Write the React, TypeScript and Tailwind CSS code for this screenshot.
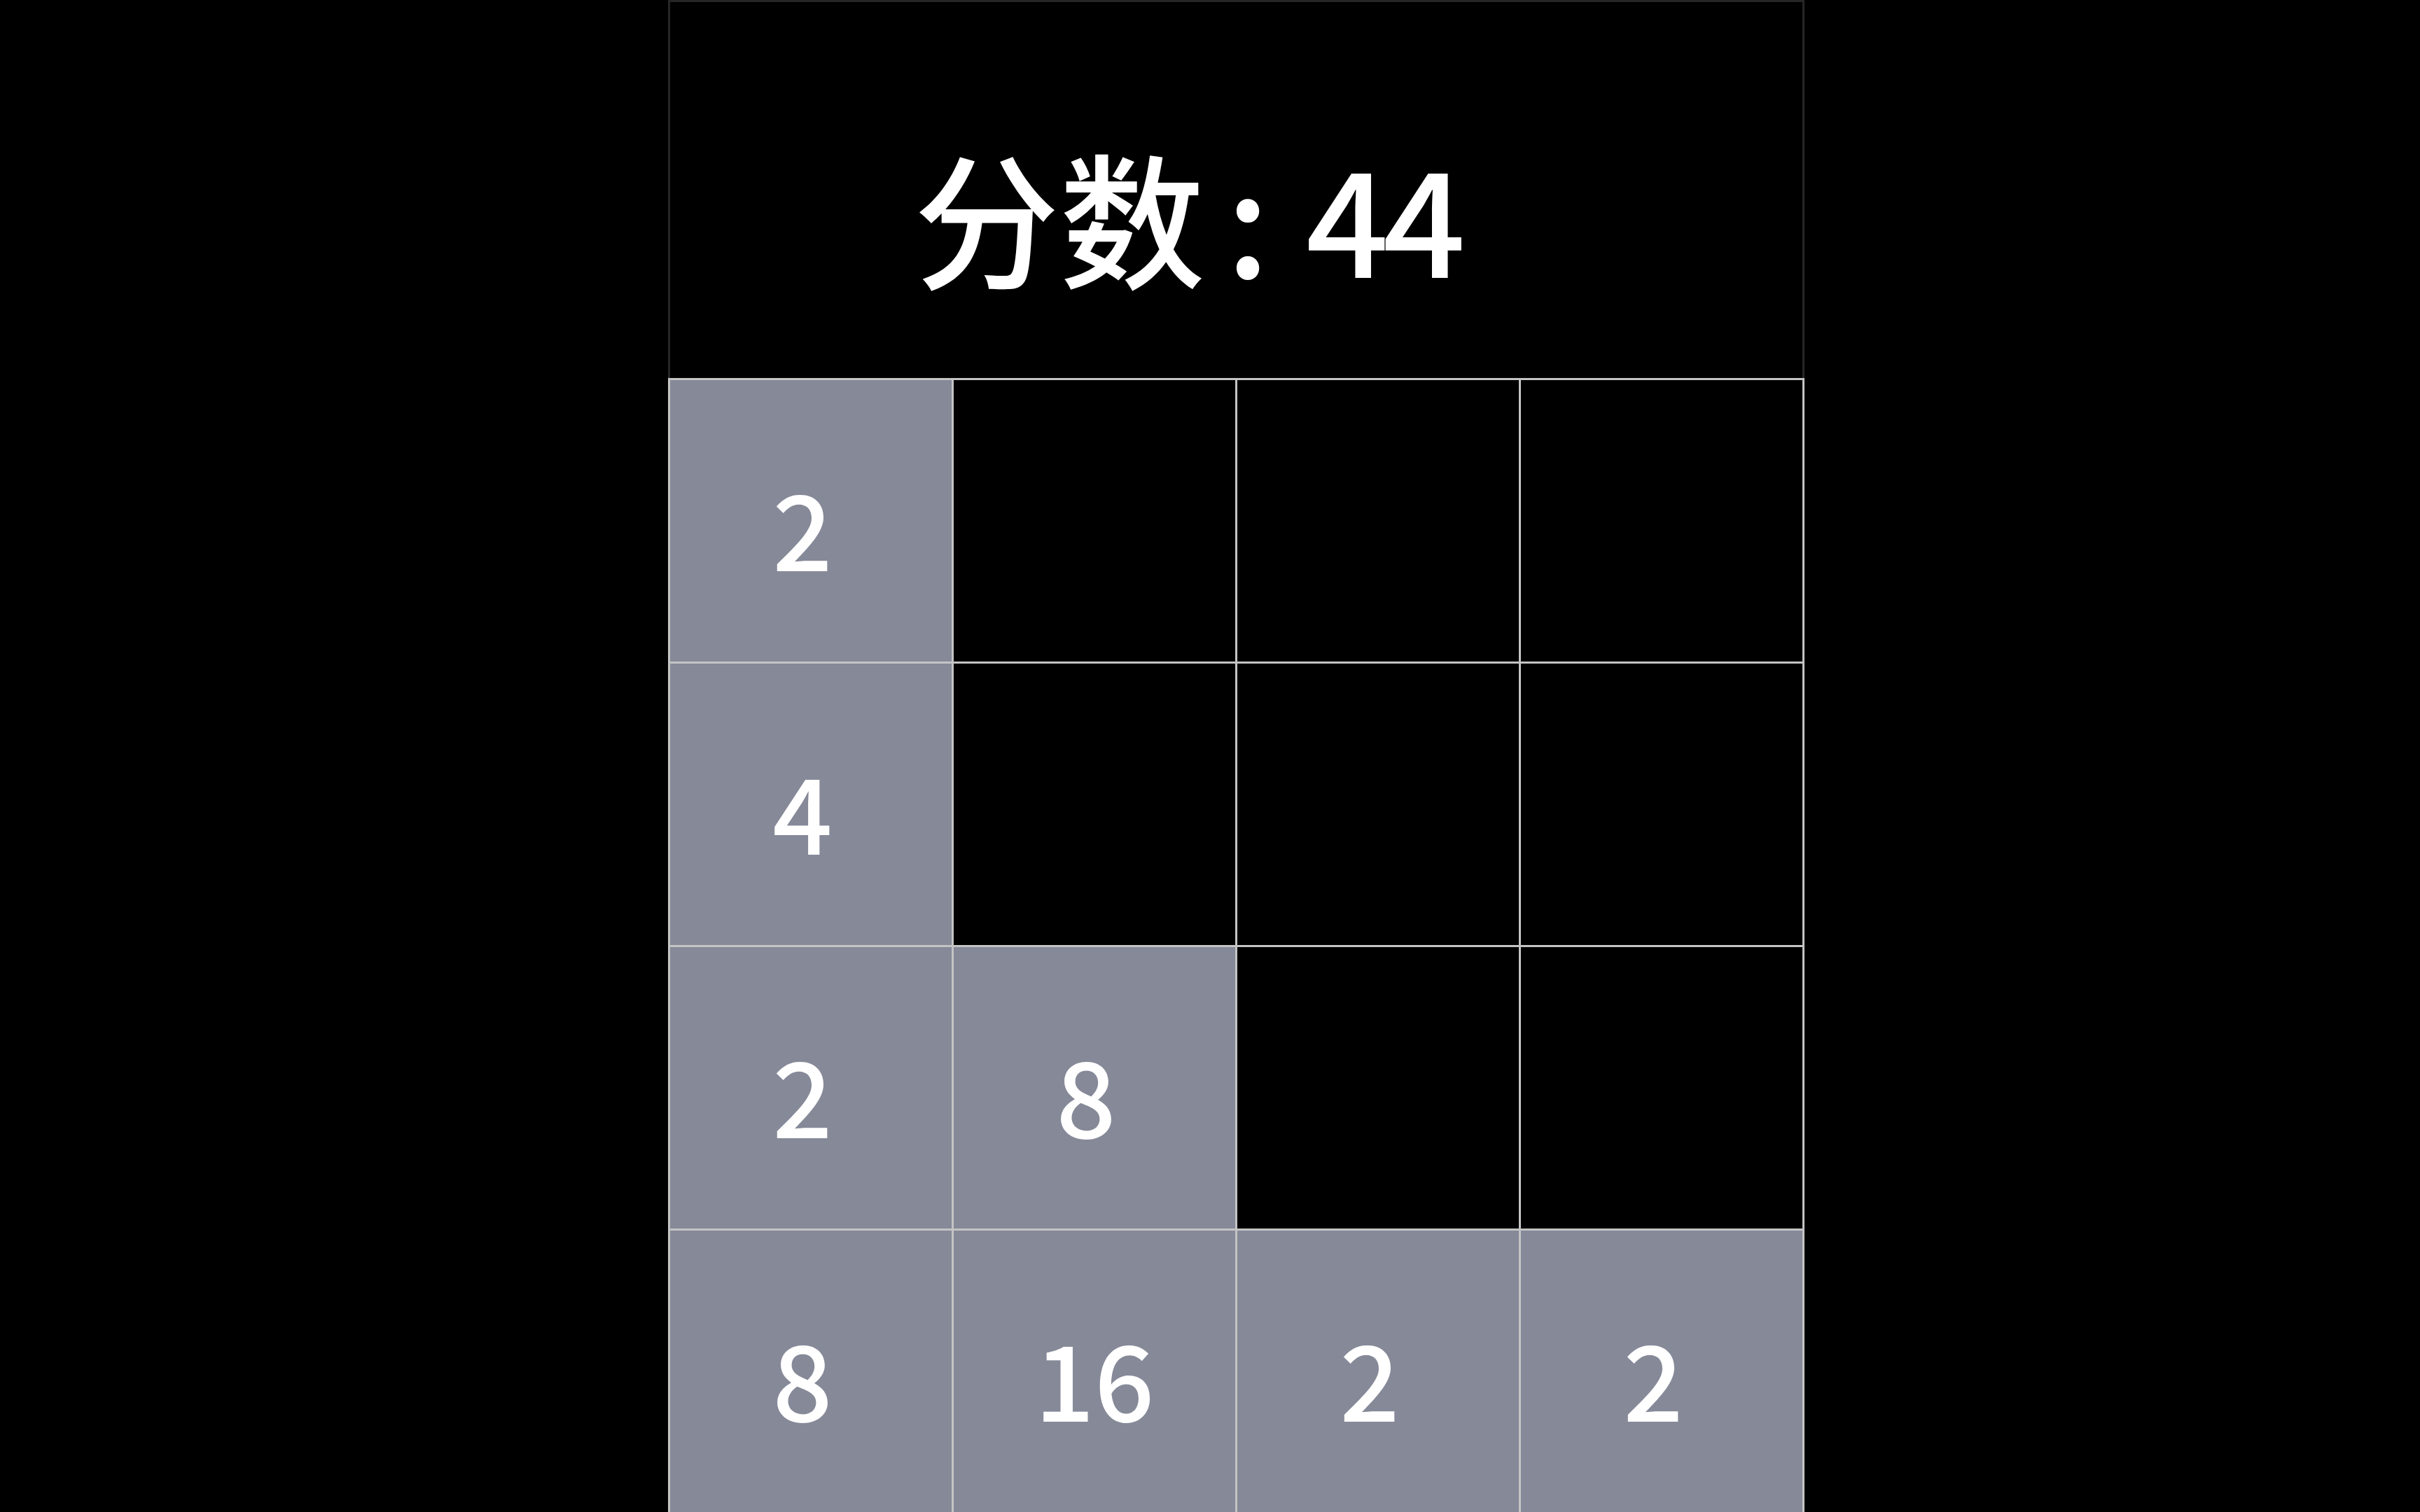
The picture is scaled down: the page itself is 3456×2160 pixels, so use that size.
const board: (number | null)[][] = [
  [2, null, null, null],
  [4, null, null, null],
  [2, 8, null, null],
  [8, 16, 2, 2],
];

const score = 44;

function Tile({ value }: { value: number | null }) {
  return (
    <div
      className={`flex h-[402px] w-[402px] items-start justify-center pt-[133px] text-[150px] font-medium leading-none text-white ${
        value ? "bg-[#868998]" : "bg-black"
      } ${value !== null && value < 10 ? "pr-[24px]" : ""}`}
    >
      {value ?? ""}
    </div>
  );
}

export default function App() {
  return (
    <div
      className="h-[2160px] w-[3456px] overflow-hidden bg-black"
      style={{ fontFamily: '"Noto Sans CJK SC", "Noto Sans", sans-serif' }}
    >
      <div className="ml-[954px] w-[1623px]">
        {/* score header */}
        <div className="flex h-[540px] items-start border-[3px] border-b-0 border-[#262626] pl-[348px] pt-[200px] text-[208px] font-medium leading-none text-white">
          <span>分数</span>
          <span className="inline-block w-[144px] pl-[30px]">:</span>
          <span className="tracking-[-9px]">{score}</span>
        </div>

        {/* 4x4 board */}
        <div className="grid grid-cols-4 gap-[3px] bg-[#c4c4c4] p-[3px]">
          {board.flat().map((v, i) => (
            <Tile key={i} value={v} />
          ))}
        </div>
      </div>
    </div>
  );
}
